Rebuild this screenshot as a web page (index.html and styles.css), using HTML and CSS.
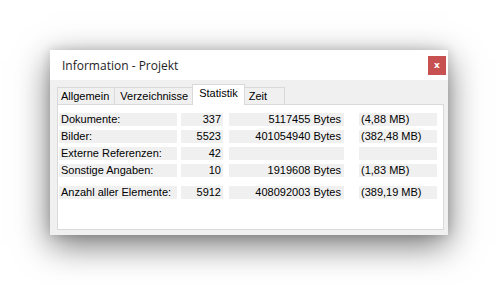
FILE: index.html
```html
<!DOCTYPE html>
<html lang="de">
<head>
  <meta charset="UTF-8" />
  <title>Information - Projekt</title>
  <link rel="stylesheet" href="styles.css">
</head>
<body>

  <div class="window">
    <div class="titlebar">
      <span class="title">Information - Projekt</span>
      <button class="close">x</button>
    </div>

    <div class="content">
      <div class="tabs">
        <div class="tab first">Allgemein</div>
        <div class="tab">Verzeichnisse</div>
        <div class="tab active">Statistik</div>
        <div class="tab last">Zeit</div>
      </div>

      <div class="panel">
        <div class="row">
          <div class="cell label">Dokumente:</div>
          <div class="cell count">337</div>
          <div class="cell bytes">5117455 Bytes</div>
          <div class="cell mb">(4,88 MB)</div>
        </div>
        <div class="row">
          <div class="cell label">Bilder:</div>
          <div class="cell count">5523</div>
          <div class="cell bytes">401054940 Bytes</div>
          <div class="cell mb">(382,48 MB)</div>
        </div>
        <div class="row">
          <div class="cell label">Externe Referenzen:</div>
          <div class="cell count">42</div>
          <div class="cell bytes"></div>
          <div class="cell mb"></div>
        </div>
        <div class="row">
          <div class="cell label">Sonstige Angaben:</div>
          <div class="cell count">10</div>
          <div class="cell bytes">1919608 Bytes</div>
          <div class="cell mb">(1,83 MB)</div>
        </div>
        <div class="row total">
          <div class="cell label">Anzahl aller Elemente:</div>
          <div class="cell count">5912</div>
          <div class="cell bytes">408092003 Bytes</div>
          <div class="cell mb">(389,19 MB)</div>
        </div>
      </div>
    </div>
  </div>

</body>
</html>
```

FILE: styles.css
```css
html {
  background: #fff;
}

body {
  margin: 0;
  padding: 50px 0 50px 50px;
  min-height: 285px;
  box-sizing: border-box;
  background: #fff;
  font-family: "Liberation Sans", Arial, sans-serif;
  font-size: 11px;
  color: #000;
}

.window {
  width: 398px;
  height: 185px;
  background: #f0f0f0;
  box-shadow: 0 10px 32px rgba(0, 0, 0, 0.55), 0 0 10px rgba(0, 0, 0, 0.15);
  display: flex;
  flex-direction: column;
}

.titlebar {
  height: 30px;
  background: #fff;
  display: flex;
  align-items: center;
  justify-content: space-between;
  padding: 0 2px 0 12px;
}

.title {
  font-family: "Open Sans", "Noto Sans", sans-serif;
  font-size: 12px;
  color: #1e1e1e;
}

.close {
  width: 18px;
  height: 19px;
  border: none;
  padding: 0;
  background: #c75050;
  color: #fff;
  font-family: "DejaVu Sans", sans-serif;
  font-size: 9px;
  font-weight: bold;
  line-height: 19px;
}

.content {
  flex: 1;
  padding: 4px 4px 5px 7px;
  display: flex;
  flex-direction: column;
}

.tabs {
  display: flex;
  align-items: flex-end;
  height: 20px;
  position: relative;
  z-index: 1;
}

.tab {
  height: 16px;
  line-height: 16px;
  padding: 0 5px;
  border: 1px solid #d9d9d9;
  border-bottom: none;
  margin-right: -1px;
  background: #f0f0f0;
}

.tab.first {
  padding: 0 5px 0 3px;
}

.tab.last {
  padding: 0 17px 0 4px;
}

.tab.active {
  height: 20px;
  line-height: 17px;
  background: #fff;
  padding: 0 6px;
  margin: 0 -1px -1px -1px;
}

.panel {
  flex: 1;
  background: #fff;
  border: 1px solid #d9d9d9;
  padding: 8px 0 0 1px;
  display: flex;
  flex-direction: column;
  gap: 4px;
}

.row {
  display: flex;
  height: 13px;
  line-height: 13px;
}

.row.total {
  margin-top: 5px;
}

.cell {
  background: #f0f0f0;
  white-space: nowrap;
}

.label {
  width: 116px;
  padding-left: 2px;
}

.count {
  width: 40px;
  margin-left: 4px;
  padding-right: 2px;
  text-align: right;
}

.bytes {
  width: 112px;
  margin-left: 6px;
  padding-right: 3px;
  text-align: right;
}

.mb {
  width: 76px;
  margin-left: 15px;
  padding-left: 2px;
}
```
